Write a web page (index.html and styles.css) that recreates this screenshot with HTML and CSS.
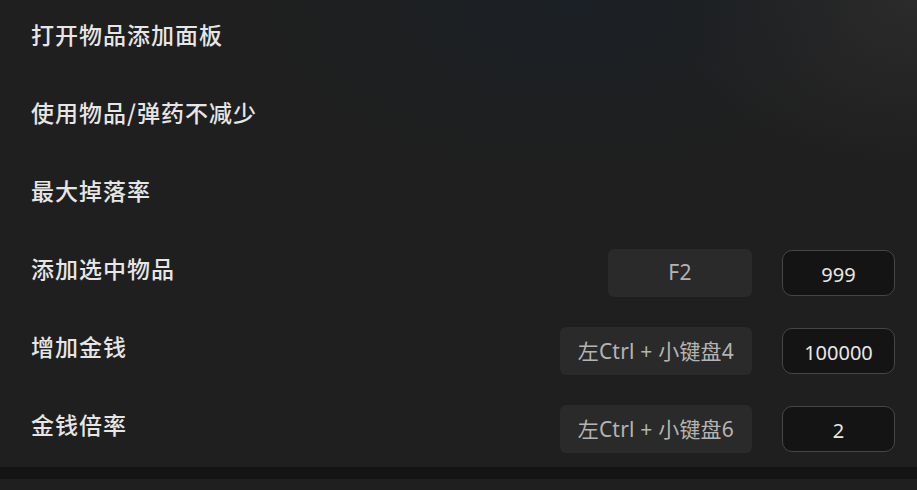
FILE: index.html
```html
<!DOCTYPE html>
<html lang="zh-CN">
<head>
    <meta charset="UTF-8">
    <meta name="viewport" content="width=device-width, initial-scale=1.0">
    <title>修改器</title>
    <link rel="stylesheet" href="styles.css">
</head>
<body>
    <div class="list">
        <div class="row">
            <span class="label">打开物品添加面板</span>
        </div>
        <div class="row">
            <span class="label">使用物品/弹药不减少</span>
        </div>
        <div class="row">
            <span class="label">最大掉落率</span>
        </div>
        <div class="row">
            <span class="label">添加选中物品</span>
            <div class="controls">
                <span class="hotkey">F2</span>
                <input class="value" type="text" value="999">
            </div>
        </div>
        <div class="row">
            <span class="label">增加金钱</span>
            <div class="controls">
                <span class="hotkey">左Ctrl + 小键盘4</span>
                <input class="value" type="text" value="100000">
            </div>
        </div>
        <div class="row">
            <span class="label">金钱倍率</span>
            <div class="controls">
                <span class="hotkey">左Ctrl + 小键盘6</span>
                <input class="value" type="text" value="2">
            </div>
        </div>
    </div>
    <div class="divider"></div>
</body>
</html>
```

FILE: styles.css
```css
body {
    margin: 0;
    height: 490px;
    overflow: hidden;
    font-family: "Noto Sans", "Noto Sans CJK SC", sans-serif;
    color: #e6e6e6;
    background:
        radial-gradient(ellipse 300px 170px at 62% 0%, rgba(26, 32, 38, 0.9), rgba(31, 31, 31, 0) 100%),
        radial-gradient(ellipse 260px 170px at 100% 0%, rgba(44, 44, 44, 0.9), rgba(31, 31, 31, 0) 100%),
        #1f1f1f;
}

.list {
    display: flex;
    flex-direction: column;
}

.row {
    height: 78px;
    display: flex;
    align-items: center;
    justify-content: space-between;
    padding: 0 22px 0 31px;
}

.label {
    font-family: "Noto Sans CJK SC", sans-serif;
    font-size: 23px;
    font-weight: 500;
    letter-spacing: 1px;
    margin-bottom: 11px;
}

.controls {
    display: flex;
    align-items: center;
    gap: 30px;
}

.hotkey {
    min-width: 144px;
    height: 48px;
    box-sizing: border-box;
    padding: 0 18px 3px 18px;
    display: flex;
    align-items: center;
    justify-content: center;
    background-color: #2a2a2a;
    border-radius: 6px;
    color: #b4b4b4;
    font-size: 21px;
    letter-spacing: 0.2px;
}

.value {
    width: 113px;
    height: 46px;
    box-sizing: border-box;
    background-color: #141414;
    border: 1px solid #464646;
    border-radius: 10px;
    color: #e8e8e8;
    font-family: "Noto Sans", sans-serif;
    font-size: 20px;
    text-align: center;
    padding: 3px 0 0 0;
    outline: none;
}

.divider {
    height: 12px;
    margin-top: -1px;
    background-color: #141414;
}
```
